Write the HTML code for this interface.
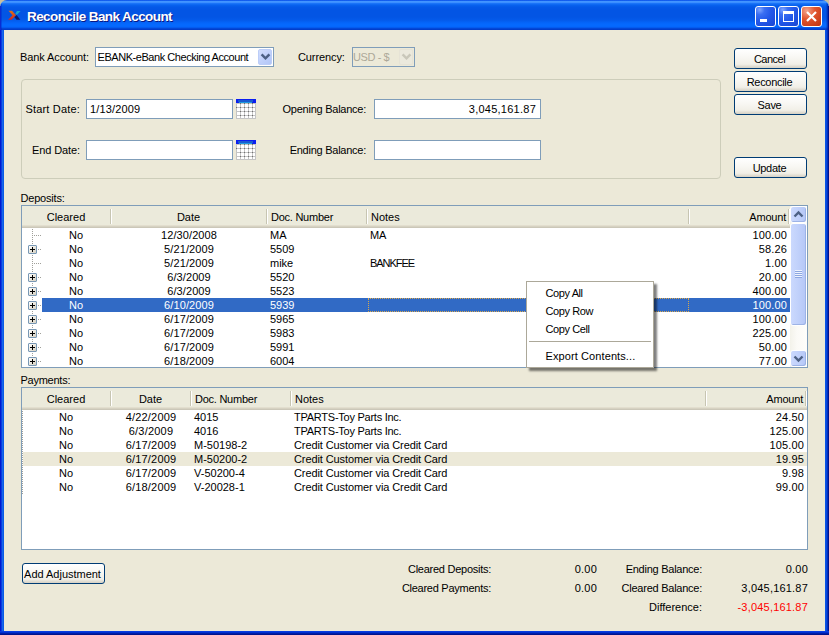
<!DOCTYPE html>
<html>
<head>
<meta charset="utf-8">
<title>Reconcile Bank Account</title>
<style>
html,body{margin:0;padding:0;}
body{width:829px;height:635px;overflow:hidden;background:#0831d9;font-family:"Liberation Sans",sans-serif;font-size:11px;color:#000;position:relative;}
div,span{box-sizing:border-box;}
#win{position:absolute;left:0;top:0;width:829px;height:635px;overflow:hidden;background:#0a3de0;}
#cl,#cr{position:absolute;top:0;width:8px;height:8px;background:#c9bf9f;}
#cl{left:0;}#cr{right:0;}
#titlebar{position:absolute;left:0;top:0;width:829px;height:30px;border-radius:7px 7px 0 0;
 background:linear-gradient(to bottom,#0246e6 0px,#1c6cf4 0.8px,#4295ff 1.5px,#3c8fff 2.5px,#1a74f8 3.5px,#0863ef 5px,#0459e8 7px,#0355e4 10px,#0355e4 17px,#045aea 20px,#0566fa 23px,#056aff 25px,#0566fb 27px,#0348d8 28.5px,#0138c4 30px);}
#bl{position:absolute;left:0;top:30px;width:4px;height:605px;background:linear-gradient(to right,#0019cf 0,#0019cf 1px,#0a3ce0 1px,#0a3ce0 2px,#1666ea 2px,#1666ea 3px,#0a5be6 3px);}
#br{position:absolute;left:825px;top:30px;width:4px;height:605px;background:linear-gradient(to left,#00128c 0,#00128c 1px,#0230be 1px,#0230be 2px,#0848dc 2px,#0848dc 3px,#0a54e4 3px);}
#bb{position:absolute;left:0;top:631px;width:829px;height:4px;background:linear-gradient(to top,#00138c 0,#00138c 1px,#001ca8 1px,#001ca8 2px,#0030d0 2px,#0030d0 3px,#0a3ce0 3px);}
#title{position:absolute;left:27px;top:8.5px;font-size:13.5px;font-weight:bold;color:#fff;text-shadow:1px 1px 0 #0a1883;white-space:nowrap;letter-spacing:-0.58px;line-height:16px;}
#client{position:absolute;left:4px;top:30px;width:821px;height:601px;background:#ece9d8;}
.lbl{position:absolute;white-space:nowrap;line-height:14px;height:14px;}
.tb{position:absolute;top:6px;width:21px;height:21px;border-radius:3px;border:1px solid #fff;}
.tb.blue{background:radial-gradient(circle at 20% 15%,#7ea4ff 0%,#3a6ef2 22%,#2459ea 50%,#1d4ddc 80%,#1a46d0 100%);}
.tb.red{background:radial-gradient(circle at 25% 20%,#f3a58e 0%,#e2552e 40%,#bf3310 100%);}
.btn{position:absolute;border:1px solid #003c74;border-radius:3px;background:linear-gradient(to bottom,#ffffff 0%,#f8f7f3 45%,#f1efe7 80%,#e0dcd1 92%,#d6d1c4 100%);text-align:center;white-space:nowrap;line-height:21px;letter-spacing:-0.3px;padding-right:2px;}
.inp{position:absolute;border:1px solid #7f9db9;background:#fff;white-space:nowrap;overflow:hidden;line-height:18px;}
.tree{position:absolute;border:1px solid #7f9db9;background:#fff;overflow:hidden;}
.hdr{position:absolute;left:0;top:0;height:22px;background:linear-gradient(to bottom,#ebeadb 0,#ebeadb 19px,#e2dece 19px,#e2dece 20px,#d6d2c2 20px,#d6d2c2 21px,#cbc7b8 21px);}
.hsep{position:absolute;top:3px;width:2px;height:15px;background:linear-gradient(to right,#c7c5b2 0,#c7c5b2 1px,#fff 1px);}
.cell{position:absolute;white-space:nowrap;height:14px;line-height:14px;}
.sel{color:#fff;}
</style>
</head>
<body>
<div id="win">
<div id="cl"></div><div id="cr"></div><div id="titlebar"></div><div id="bl"></div><div id="br"></div><div id="bb"></div><div style="position:absolute;left:0;top:6px;width:1px;height:24px;background:#0a2cd2"></div><div style="position:absolute;left:1px;top:4px;width:1px;height:26px;background:rgba(0,30,200,0.35)"></div><div style="position:absolute;left:828px;top:6px;width:1px;height:24px;background:#00128c"></div><div style="position:absolute;left:827px;top:4px;width:1px;height:26px;background:rgba(0,20,150,0.55)"></div><div style="position:absolute;left:826px;top:3px;width:1px;height:27px;background:rgba(0,20,150,0.2)"></div>
<svg style="position:absolute;left:6.5px;top:10px" width="14" height="11" viewBox="0 0 14 11">
<defs><linearGradient id="gx" x1="0" y1="0" x2="0" y2="1"><stop offset="0" stop-color="#de7418"/><stop offset="1" stop-color="#d4241c"/></linearGradient></defs>
<path d="M1.5,0.8 L5,0.8 L9,5.3 L4.5,9.8 L1,9.8 L5.5,5.3 Z" fill="url(#gx)"/>
<path d="M8.4,3.4 L10,1 L13.6,1 L9.8,5 Z" fill="#18a4cc"/>
<path d="M8.2,6.2 L9.6,5 L13.3,9.8 L9.6,9.8 L7.5,7.2 Z" fill="#0a1a6e"/>
</svg>
<div id="title">Reconcile Bank Account</div>
<div class="tb blue" style="left:755px"><div style="position:absolute;left:4px;top:12px;width:7px;height:3px;background:#fff"></div></div>
<div class="tb blue" style="left:778px"><div style="position:absolute;left:4px;top:4px;width:11px;height:11px;border:1px solid #fff;border-top-width:3px"></div></div>
<div class="tb red" style="left:801px"><svg width="19" height="19" style="position:absolute;left:0;top:0"><path d="M5,5 L14,14 M14,5 L5,14" stroke="#fff" stroke-width="2.2"/></svg></div>
<div id="client"></div>
<div class="lbl" style="left:20px;top:50px;letter-spacing:-0.1px;">Bank Account:</div>
<div class="inp" style="left:95px;top:47px;width:179px;height:20px;"><span style="position:absolute;left:1.5px;top:0;letter-spacing:-0.45px">EBANK-eBank Checking Account</span><div style="position:absolute;left:162px;top:1px;width:14px;height:16px;border-radius:2px;border:1px solid #bccdf8;background:linear-gradient(135deg,#d3dffd,#c1d1fb 50%,#b2c6f7)"></div><svg style="position:absolute;left:162px;top:1px" width="15" height="16"><path d="M3.6,5.4 L7.5,9.3 L11.4,5.4" stroke="#4d6185" stroke-width="2.5" fill="none"/></svg></div>
<div class="lbl" style="left:298px;top:50px;letter-spacing:-0.1px;">Currency:</div>
<div class="inp" style="left:352px;top:47px;width:63px;height:20px;background:#ece9d8;color:#aca899;border-color:#7f9db9"><span style="position:absolute;left:0px;top:0;letter-spacing:-0.4px">USD - $</span><div style="position:absolute;left:46px;top:1px;width:14px;height:16px;border-radius:2px;border:1px solid #e6e3d6;background:#ebe9dd"></div><svg style="position:absolute;left:46px;top:1px" width="15" height="16"><path d="M3.6,5.4 L7.5,9.3 L11.4,5.4" stroke="#c9c7ba" stroke-width="2.5" fill="none"/></svg></div>
<div class="btn" style="left:734px;top:48px;width:73px;height:21px;letter-spacing:-0.5px;">Cancel</div>
<div class="btn" style="left:734px;top:71px;width:73px;height:21px;">Reconcile</div>
<div class="btn" style="left:734px;top:94px;width:73px;height:21px;">Save</div>
<div class="btn" style="left:734px;top:157px;width:73px;height:21px;">Update</div>
<div style="position:absolute;left:21px;top:79px;width:700px;height:100px;border:1px solid #cdcdba;border-radius:4px;"></div>
<div class="lbl" style="left:-120px;top:102px;width:200px;text-align:right;letter-spacing:0.18px;">Start Date:</div>
<div class="inp" style="left:86px;top:99px;width:147px;height:20px;"><span style="position:absolute;left:3px;top:0;letter-spacing:0.15px">1/13/2009</span></div>
<div class="lbl" style="left:-120px;top:143px;width:200px;text-align:right;letter-spacing:-0.1px;">End Date:</div>
<div class="inp" style="left:86px;top:140px;width:147px;height:20px;"></div>
<svg style="position:absolute;left:236px;top:99px" width="20" height="20" viewBox="0 0 20 20"><rect x="0" y="0" width="20" height="20" fill="#fff"/><rect x="0" y="0" width="20" height="4" fill="#0a1ef0"/><rect x="2" y="1" width="15" height="2" fill="#1a5ad0"/><rect x="3" y="3" width="13" height="1" fill="#1f9be0"/><path d="M0.5,4 V20 M4.5,4 V20 M8.5,4 V20 M12.5,4 V20 M16.5,4 V20 M19.5,4 V20 M0,8.5 H20 M0,12.5 H20 M0,16.5 H20 M0,19.5 H20 M0,4.5 H20" stroke="#c4c4c4" stroke-width="1" fill="none"/><path d="M4,8.5h1M8,8.5h1M12,8.5h1M16,8.5h1M0,8.5h1M4,12.5h1M8,12.5h1M12,12.5h1M16,12.5h1M4,16.5h1M8,16.5h1M12,16.5h1M16,16.5h1M4,4.5h1M8,4.5h1M12,4.5h1M16,4.5h1" stroke="#707070" stroke-width="1" fill="none"/></svg>
<svg style="position:absolute;left:236px;top:140px" width="20" height="20" viewBox="0 0 20 20"><rect x="0" y="0" width="20" height="20" fill="#fff"/><rect x="0" y="0" width="20" height="4" fill="#0a1ef0"/><rect x="2" y="1" width="15" height="2" fill="#1a5ad0"/><rect x="3" y="3" width="13" height="1" fill="#1f9be0"/><path d="M0.5,4 V20 M4.5,4 V20 M8.5,4 V20 M12.5,4 V20 M16.5,4 V20 M19.5,4 V20 M0,8.5 H20 M0,12.5 H20 M0,16.5 H20 M0,19.5 H20 M0,4.5 H20" stroke="#c4c4c4" stroke-width="1" fill="none"/><path d="M4,8.5h1M8,8.5h1M12,8.5h1M16,8.5h1M0,8.5h1M4,12.5h1M8,12.5h1M12,12.5h1M16,12.5h1M4,16.5h1M8,16.5h1M12,16.5h1M16,16.5h1M4,4.5h1M8,4.5h1M12,4.5h1M16,4.5h1" stroke="#707070" stroke-width="1" fill="none"/></svg>
<div class="lbl" style="left:166px;top:102px;width:200px;text-align:right;letter-spacing:-0.25px;">Opening Balance:</div>
<div class="inp" style="left:374px;top:99px;width:167px;height:20px;"><span style="position:absolute;right:4px;top:0;letter-spacing:0.25px">3,045,161.87</span></div>
<div class="lbl" style="left:166px;top:143px;width:200px;text-align:right;letter-spacing:-0.25px;">Ending Balance:</div>
<div class="inp" style="left:374px;top:140px;width:167px;height:20px;"></div>
<div class="lbl" style="left:20.5px;top:191px;letter-spacing:-0.2px;">Deposits:</div>
<div class="tree" style="left:21px;top:205px;width:787px;height:163px;">
<div class="hdr" style="width:768px"></div>
<div class="hsep" style="left:88px"></div>
<div class="hsep" style="left:244px"></div>
<div class="hsep" style="left:344px"></div>
<div class="hsep" style="left:666px"></div>
<div class="hsep" style="left:766px"></div>
<div class="cell" style="left:0px;width:88px;top:4px;text-align:center">Cleared</div>
<div class="cell" style="left:89px;width:155px;top:4px;text-align:center">Date</div>
<div class="cell" style="left:249px;width:95px;top:4px;text-align:left"><span style="letter-spacing:-0.25px">Doc. Number</span></div>
<div class="cell" style="left:349px;width:317px;top:4px;text-align:left">Notes</div>
<div class="cell" style="left:668px;width:96px;top:4px;text-align:right"><span style="letter-spacing:-0.2px">Amount</span></div>
<div style="position:absolute;left:10px;top:23px;width:1px;height:139px;background:repeating-linear-gradient(to bottom,#a0a09a 0,#a0a09a 1px,transparent 1px,transparent 2px)"></div>
<div style="position:absolute;left:11px;top:29px;width:8px;height:1px;background:repeating-linear-gradient(to right,transparent 0,transparent 1px,#a0a09a 1px,#a0a09a 2px)"></div>
<div class="cell" style="left:20px;width:68px;top:22px;text-align:center">No</div>
<div class="cell" style="left:89px;width:156px;top:22px;text-align:center;letter-spacing:0.1px">12/30/2008</div>
<div class="cell" style="left:248px;top:22px">MA</div>
<div class="cell" style="left:348px;top:22px;letter-spacing:-0.2px">MA</div>
<div class="cell" style="left:668px;width:97px;top:22px;text-align:right;letter-spacing:0.15px">100.00</div>
<div style="position:absolute;left:11px;top:43px;width:8px;height:1px;background:repeating-linear-gradient(to right,transparent 0,transparent 1px,#a0a09a 1px,#a0a09a 2px)"></div>
<div style="position:absolute;left:6px;top:39px;width:9px;height:9px;border:1px solid #7898b5;border-radius:1px;background:linear-gradient(135deg,#fff,#d5d0c0)"><div style="position:absolute;left:1px;top:3px;width:5px;height:1px;background:#000"></div><div style="position:absolute;left:3px;top:1px;width:1px;height:5px;background:#000"></div></div>
<div class="cell" style="left:20px;width:68px;top:36px;text-align:center">No</div>
<div class="cell" style="left:89px;width:156px;top:36px;text-align:center;letter-spacing:0.1px">5/21/2009</div>
<div class="cell" style="left:248px;top:36px">5509</div>
<div class="cell" style="left:668px;width:97px;top:36px;text-align:right;letter-spacing:0.15px">58.26</div>
<div style="position:absolute;left:11px;top:57px;width:8px;height:1px;background:repeating-linear-gradient(to right,transparent 0,transparent 1px,#a0a09a 1px,#a0a09a 2px)"></div>
<div class="cell" style="left:20px;width:68px;top:50px;text-align:center">No</div>
<div class="cell" style="left:89px;width:156px;top:50px;text-align:center;letter-spacing:0.1px">5/21/2009</div>
<div class="cell" style="left:248px;top:50px">mike</div>
<div class="cell" style="left:348px;top:50px;letter-spacing:-1.05px">BANKFEE</div>
<div class="cell" style="left:668px;width:97px;top:50px;text-align:right;letter-spacing:0.15px">1.00</div>
<div style="position:absolute;left:11px;top:71px;width:8px;height:1px;background:repeating-linear-gradient(to right,transparent 0,transparent 1px,#a0a09a 1px,#a0a09a 2px)"></div>
<div style="position:absolute;left:6px;top:67px;width:9px;height:9px;border:1px solid #7898b5;border-radius:1px;background:linear-gradient(135deg,#fff,#d5d0c0)"><div style="position:absolute;left:1px;top:3px;width:5px;height:1px;background:#000"></div><div style="position:absolute;left:3px;top:1px;width:1px;height:5px;background:#000"></div></div>
<div class="cell" style="left:20px;width:68px;top:64px;text-align:center">No</div>
<div class="cell" style="left:89px;width:156px;top:64px;text-align:center;letter-spacing:0.1px">6/3/2009</div>
<div class="cell" style="left:248px;top:64px">5520</div>
<div class="cell" style="left:668px;width:97px;top:64px;text-align:right;letter-spacing:0.15px">20.00</div>
<div style="position:absolute;left:11px;top:85px;width:8px;height:1px;background:repeating-linear-gradient(to right,transparent 0,transparent 1px,#a0a09a 1px,#a0a09a 2px)"></div>
<div style="position:absolute;left:6px;top:81px;width:9px;height:9px;border:1px solid #7898b5;border-radius:1px;background:linear-gradient(135deg,#fff,#d5d0c0)"><div style="position:absolute;left:1px;top:3px;width:5px;height:1px;background:#000"></div><div style="position:absolute;left:3px;top:1px;width:1px;height:5px;background:#000"></div></div>
<div class="cell" style="left:20px;width:68px;top:78px;text-align:center">No</div>
<div class="cell" style="left:89px;width:156px;top:78px;text-align:center;letter-spacing:0.1px">6/3/2009</div>
<div class="cell" style="left:248px;top:78px">5523</div>
<div class="cell" style="left:668px;width:97px;top:78px;text-align:right;letter-spacing:0.15px">400.00</div>
<div style="position:absolute;left:20px;top:92px;width:748px;height:14px;background:#316ac5"></div>
<div style="position:absolute;left:346px;top:92px;width:321px;height:14px;border:1px dotted #d8a850"></div>
<div style="position:absolute;left:11px;top:99px;width:8px;height:1px;background:repeating-linear-gradient(to right,transparent 0,transparent 1px,#a0a09a 1px,#a0a09a 2px)"></div>
<div style="position:absolute;left:6px;top:95px;width:9px;height:9px;border:1px solid #7898b5;border-radius:1px;background:linear-gradient(135deg,#fff,#d5d0c0)"><div style="position:absolute;left:1px;top:3px;width:5px;height:1px;background:#000"></div><div style="position:absolute;left:3px;top:1px;width:1px;height:5px;background:#000"></div></div>
<div class="cell sel" style="left:20px;width:68px;top:92px;text-align:center">No</div>
<div class="cell sel" style="left:89px;width:156px;top:92px;text-align:center;letter-spacing:0.1px">6/10/2009</div>
<div class="cell sel" style="left:248px;top:92px">5939</div>
<div class="cell sel" style="left:668px;width:97px;top:92px;text-align:right;letter-spacing:0.15px">100.00</div>
<div style="position:absolute;left:11px;top:113px;width:8px;height:1px;background:repeating-linear-gradient(to right,transparent 0,transparent 1px,#a0a09a 1px,#a0a09a 2px)"></div>
<div style="position:absolute;left:6px;top:109px;width:9px;height:9px;border:1px solid #7898b5;border-radius:1px;background:linear-gradient(135deg,#fff,#d5d0c0)"><div style="position:absolute;left:1px;top:3px;width:5px;height:1px;background:#000"></div><div style="position:absolute;left:3px;top:1px;width:1px;height:5px;background:#000"></div></div>
<div class="cell" style="left:20px;width:68px;top:106px;text-align:center">No</div>
<div class="cell" style="left:89px;width:156px;top:106px;text-align:center;letter-spacing:0.1px">6/17/2009</div>
<div class="cell" style="left:248px;top:106px">5965</div>
<div class="cell" style="left:668px;width:97px;top:106px;text-align:right;letter-spacing:0.15px">100.00</div>
<div style="position:absolute;left:11px;top:127px;width:8px;height:1px;background:repeating-linear-gradient(to right,transparent 0,transparent 1px,#a0a09a 1px,#a0a09a 2px)"></div>
<div style="position:absolute;left:6px;top:123px;width:9px;height:9px;border:1px solid #7898b5;border-radius:1px;background:linear-gradient(135deg,#fff,#d5d0c0)"><div style="position:absolute;left:1px;top:3px;width:5px;height:1px;background:#000"></div><div style="position:absolute;left:3px;top:1px;width:1px;height:5px;background:#000"></div></div>
<div class="cell" style="left:20px;width:68px;top:120px;text-align:center">No</div>
<div class="cell" style="left:89px;width:156px;top:120px;text-align:center;letter-spacing:0.1px">6/17/2009</div>
<div class="cell" style="left:248px;top:120px">5983</div>
<div class="cell" style="left:668px;width:97px;top:120px;text-align:right;letter-spacing:0.15px">225.00</div>
<div style="position:absolute;left:11px;top:141px;width:8px;height:1px;background:repeating-linear-gradient(to right,transparent 0,transparent 1px,#a0a09a 1px,#a0a09a 2px)"></div>
<div style="position:absolute;left:6px;top:137px;width:9px;height:9px;border:1px solid #7898b5;border-radius:1px;background:linear-gradient(135deg,#fff,#d5d0c0)"><div style="position:absolute;left:1px;top:3px;width:5px;height:1px;background:#000"></div><div style="position:absolute;left:3px;top:1px;width:1px;height:5px;background:#000"></div></div>
<div class="cell" style="left:20px;width:68px;top:134px;text-align:center">No</div>
<div class="cell" style="left:89px;width:156px;top:134px;text-align:center;letter-spacing:0.1px">6/17/2009</div>
<div class="cell" style="left:248px;top:134px">5991</div>
<div class="cell" style="left:668px;width:97px;top:134px;text-align:right;letter-spacing:0.15px">50.00</div>
<div style="position:absolute;left:11px;top:155px;width:8px;height:1px;background:repeating-linear-gradient(to right,transparent 0,transparent 1px,#a0a09a 1px,#a0a09a 2px)"></div>
<div style="position:absolute;left:6px;top:151px;width:9px;height:9px;border:1px solid #7898b5;border-radius:1px;background:linear-gradient(135deg,#fff,#d5d0c0)"><div style="position:absolute;left:1px;top:3px;width:5px;height:1px;background:#000"></div><div style="position:absolute;left:3px;top:1px;width:1px;height:5px;background:#000"></div></div>
<div class="cell" style="left:20px;width:68px;top:148px;text-align:center">No</div>
<div class="cell" style="left:89px;width:156px;top:148px;text-align:center;letter-spacing:0.1px">6/18/2009</div>
<div class="cell" style="left:248px;top:148px">6004</div>
<div class="cell" style="left:668px;width:97px;top:148px;text-align:right;letter-spacing:0.15px">77.00</div>
<div style="position:absolute;left:768px;top:0;width:17px;height:161px;background:linear-gradient(to right,#f3f2ea,#fbfaf6 40%,#fefefb)"></div>
<div style="position:absolute;left:768px;top:0px;width:17px;height:17px;border:1px solid #fff;border-radius:3px;background:linear-gradient(to right,#cbd9fd,#c1d1fb 45%,#b5c7f6);box-shadow:inset -1px -1px 0 #9db3e6"></div><svg style="position:absolute;left:768px;top:0px" width="17" height="17"><path d="M4.5,10.5 L8.5,6.5 L12.5,10.5" stroke="#4d6185" stroke-width="2.4" fill="none"/></svg>
<div style="position:absolute;left:768px;top:17px;width:17px;height:103px;border:1px solid #fff;border-radius:3px;background:linear-gradient(to right,#cbd9fd,#c1d1fb 45%,#b5c7f6);box-shadow:inset -1px -1px 0 #9db3e6"></div>
<div style="position:absolute;left:773px;top:64px;width:7px;height:1px;background:#eef3fe;box-shadow:0 1px 0 #8ca6e0"></div>
<div style="position:absolute;left:773px;top:66px;width:7px;height:1px;background:#eef3fe;box-shadow:0 1px 0 #8ca6e0"></div>
<div style="position:absolute;left:773px;top:68px;width:7px;height:1px;background:#eef3fe;box-shadow:0 1px 0 #8ca6e0"></div>
<div style="position:absolute;left:773px;top:70px;width:7px;height:1px;background:#eef3fe;box-shadow:0 1px 0 #8ca6e0"></div>
<div style="position:absolute;left:768px;top:144px;width:17px;height:17px;border:1px solid #fff;border-radius:3px;background:linear-gradient(to right,#cbd9fd,#c1d1fb 45%,#b5c7f6);box-shadow:inset -1px -1px 0 #9db3e6"></div><svg style="position:absolute;left:768px;top:144px" width="17" height="17"><path d="M4.5,6.5 L8.5,10.5 L12.5,6.5" stroke="#4d6185" stroke-width="2.4" fill="none"/></svg>
</div>
<div class="lbl" style="left:20.5px;top:373px;letter-spacing:-0.25px;">Payments:</div>
<div class="tree" style="left:21px;top:387px;width:787px;height:163px;">
<div class="hdr" style="width:785px"></div>
<div class="hsep" style="left:88px"></div>
<div class="hsep" style="left:168px"></div>
<div class="hsep" style="left:268px"></div>
<div class="hsep" style="left:683px"></div>
<div class="hsep" style="left:783px"></div>
<div class="cell" style="left:0px;width:88px;top:4px;text-align:center">Cleared</div>
<div class="cell" style="left:89px;width:79px;top:4px;text-align:center">Date</div>
<div class="cell" style="left:173px;width:95px;top:4px;text-align:left"><span style="letter-spacing:-0.25px">Doc. Number</span></div>
<div class="cell" style="left:273px;width:410px;top:4px;text-align:left">Notes</div>
<div class="cell" style="left:685px;width:96px;top:4px;text-align:right"><span style="letter-spacing:-0.2px">Amount</span></div>
<div style="position:absolute;left:0px;top:23px;width:1px;height:83px;background:repeating-linear-gradient(to bottom,#a0a09a 0,#a0a09a 1px,transparent 1px,transparent 2px)"></div>
<div class="cell" style="left:0px;width:88px;top:22px;text-align:center">No</div>
<div class="cell" style="left:89px;width:80px;top:22px;text-align:center;letter-spacing:0.2px">4/22/2009</div>
<div class="cell" style="left:172px;top:22px">4015</div>
<div class="cell" style="left:272px;top:22px;letter-spacing:-0.25px">TPARTS-Toy Parts Inc.</div>
<div class="cell" style="left:685px;width:97px;top:22px;text-align:right;letter-spacing:0.15px">24.50</div>
<div class="cell" style="left:0px;width:88px;top:36px;text-align:center">No</div>
<div class="cell" style="left:89px;width:80px;top:36px;text-align:center;letter-spacing:0.2px">6/3/2009</div>
<div class="cell" style="left:172px;top:36px">4016</div>
<div class="cell" style="left:272px;top:36px;letter-spacing:-0.25px">TPARTS-Toy Parts Inc.</div>
<div class="cell" style="left:685px;width:97px;top:36px;text-align:right;letter-spacing:0.15px">125.00</div>
<div class="cell" style="left:0px;width:88px;top:50px;text-align:center">No</div>
<div class="cell" style="left:89px;width:80px;top:50px;text-align:center;letter-spacing:0.2px">6/17/2009</div>
<div class="cell" style="left:172px;top:50px">M-50198-2</div>
<div class="cell" style="left:272px;top:50px;letter-spacing:-0.1px">Credit Customer via Credit Card</div>
<div class="cell" style="left:685px;width:97px;top:50px;text-align:right;letter-spacing:0.15px">105.00</div>
<div style="position:absolute;left:1px;top:64px;width:785px;height:14px;background:#ece9d8"></div>
<div class="cell" style="left:0px;width:88px;top:64px;text-align:center">No</div>
<div class="cell" style="left:89px;width:80px;top:64px;text-align:center;letter-spacing:0.2px">6/17/2009</div>
<div class="cell" style="left:172px;top:64px">M-50200-2</div>
<div class="cell" style="left:272px;top:64px;letter-spacing:-0.1px">Credit Customer via Credit Card</div>
<div class="cell" style="left:685px;width:97px;top:64px;text-align:right;letter-spacing:0.15px">19.95</div>
<div class="cell" style="left:0px;width:88px;top:78px;text-align:center">No</div>
<div class="cell" style="left:89px;width:80px;top:78px;text-align:center;letter-spacing:0.2px">6/17/2009</div>
<div class="cell" style="left:172px;top:78px">V-50200-4</div>
<div class="cell" style="left:272px;top:78px;letter-spacing:-0.1px">Credit Customer via Credit Card</div>
<div class="cell" style="left:685px;width:97px;top:78px;text-align:right;letter-spacing:0.15px">9.98</div>
<div class="cell" style="left:0px;width:88px;top:92px;text-align:center">No</div>
<div class="cell" style="left:89px;width:80px;top:92px;text-align:center;letter-spacing:0.2px">6/18/2009</div>
<div class="cell" style="left:172px;top:92px">V-20028-1</div>
<div class="cell" style="left:272px;top:92px;letter-spacing:-0.1px">Credit Customer via Credit Card</div>
<div class="cell" style="left:685px;width:97px;top:92px;text-align:right;letter-spacing:0.15px">99.00</div>
</div>
<div class="btn" style="left:22px;top:563px;width:83px;height:21px;letter-spacing:-0.02px;">Add Adjustment</div>
<div class="lbl" style="left:291px;top:562px;width:200px;text-align:right;letter-spacing:-0.26px;">Cleared Deposits:</div>
<div class="lbl" style="left:397px;top:562px;width:200px;text-align:right;letter-spacing:0.2px;">0.00</div>
<div class="lbl" style="left:502px;top:562px;width:200px;text-align:right;letter-spacing:-0.25px;">Ending Balance:</div>
<div class="lbl" style="left:608px;top:562px;width:200px;text-align:right;letter-spacing:0.2px;">0.00</div>
<div class="lbl" style="left:291px;top:581px;width:200px;text-align:right;letter-spacing:-0.26px;">Cleared Payments:</div>
<div class="lbl" style="left:397px;top:581px;width:200px;text-align:right;letter-spacing:0.2px;">0.00</div>
<div class="lbl" style="left:502px;top:581px;width:200px;text-align:right;letter-spacing:-0.25px;">Cleared Balance:</div>
<div class="lbl" style="left:608px;top:581px;width:200px;text-align:right;letter-spacing:0.2px;">3,045,161.87</div>
<div class="lbl" style="left:502px;top:600px;width:200px;text-align:right;">Difference:</div>
<div class="lbl" style="left:608px;top:600px;width:200px;text-align:right;color:#ff0000;letter-spacing:0.2px;">-3,045,161.87</div>
<div style="position:absolute;left:526px;top:281px;width:128px;height:87px;border:1px solid #aca899;background:#fff;box-shadow:3px 3px 2px rgba(0,0,0,0.5)"></div>
<div class="lbl" style="left:545.5px;top:286px;letter-spacing:-0.4px;">Copy All</div>
<div class="lbl" style="left:545.5px;top:304px;letter-spacing:-0.4px;">Copy Row</div>
<div class="lbl" style="left:545.5px;top:322px;letter-spacing:-0.4px;">Copy Cell</div>
<div class="lbl" style="left:545.5px;top:349px;letter-spacing:0.1px;">Export Contents...</div>
<div style="position:absolute;left:529px;top:341px;width:122px;height:1px;background:#aca899"></div>
</div>
</body>
</html>
